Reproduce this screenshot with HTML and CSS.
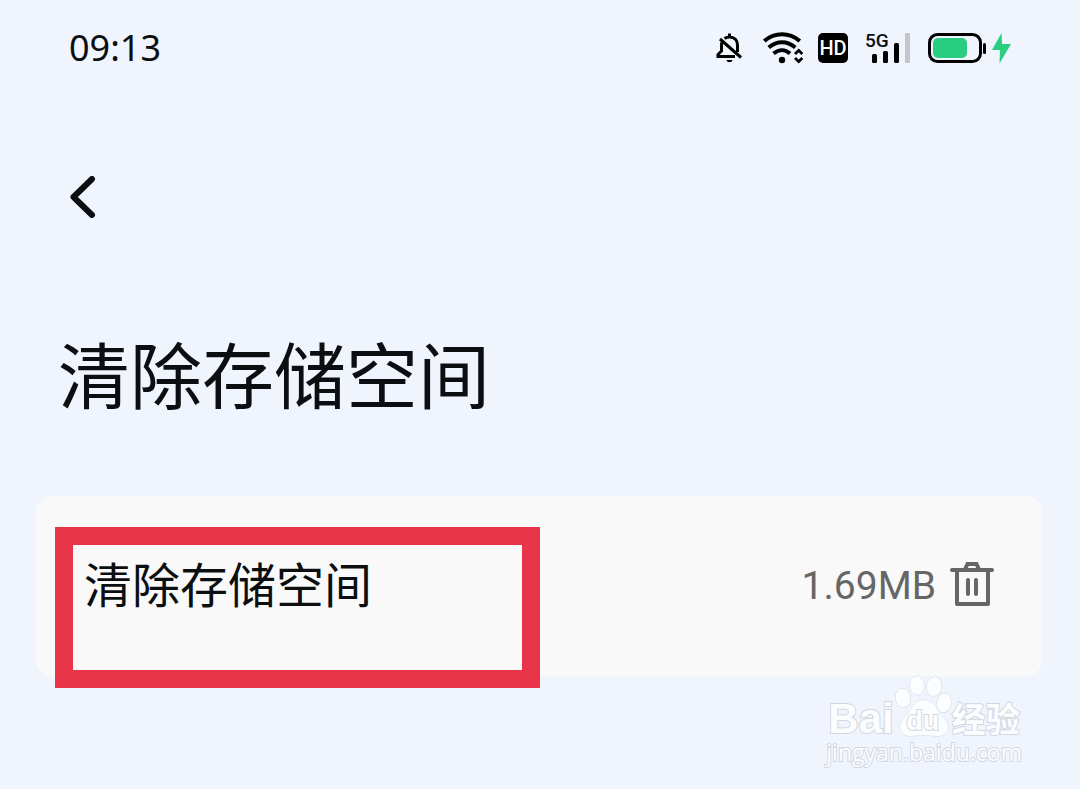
FILE: index.html
```html
<!DOCTYPE html>
<html lang="zh-CN">
<head>
    <meta charset="UTF-8">
    <meta name="viewport" content="width=device-width, initial-scale=1.0">
    <title>清除存储空间</title>
    <link rel="stylesheet" href="styles.css">
</head>
<body>
    <header class="status-bar">
        <time class="clock">09:13</time>
        <div class="status-icons">
            <!-- muted bell -->
            <svg class="bell" width="28" height="32" viewBox="0 0 28 32" fill="none" stroke="#000" stroke-width="3">
                <path d="M9.500 6.500C11 5.500 12.500 5 14.500 5c5 0 8 3.400 8 8v7"/>
                <path d="M7 10.500C6.500 11.500 6.500 12 6.500 13v6L3 22.500V24.500H20"/>
                <path d="M5 7l21 18.500M14.500 1.500V5"/>
                <path d="M11.500 28h6c-.5 3-5.500 3-6 0z" fill="#000" stroke="none"/>
            </svg>
            <!-- wifi -->
            <svg class="wifi" width="40" height="32" viewBox="0 0 40 32" fill="none" stroke="#000" stroke-width="4">
                <path d="M1.200 9C12 0 26 0 36.800 9"/>
                <path d="M5.700 15.500C14 8.500 24 8.500 32.300 15.500"/>
                <path d="M10.600 21.500C16 17 22 17 27 21.500"/>
                <circle cx="19" cy="28" r="3.200" fill="#000" stroke="none"/>
                <path d="M32 22l3.700-3.500 3.700 3.500M32 26l3.700 3.500 3.700-3.500" stroke-width="2.800"/>
            </svg>
            <span class="hd">HD</span>
            <!-- signal -->
            <div class="signal">
                <span class="network">5G</span>
                <svg width="44" height="32" viewBox="0 0 44 32">
                    <rect x="6" y="22" width="5" height="9" rx="1.500"/>
                    <rect x="17" y="19" width="5" height="12" rx="1.500"/>
                    <rect x="28" y="11" width="5" height="20" rx="1.500"/>
                    <rect x="39" y="1" width="5" height="30" rx="1" fill="#c5c6cb"/>
                </svg>
            </div>
            <!-- battery -->
            <svg class="battery" width="84" height="32" viewBox="0 0 84 32">
                <rect x="1.500" y="2.500" width="51" height="27" rx="8" fill="none" stroke="#000" stroke-width="3"/>
                <rect x="5" y="6" width="34" height="20" rx="5" fill="#2ace80"/>
                <rect x="55" y="11" width="3" height="11" rx="1.500"/>
                <path d="M73.500 1L64 18h8l-.5 13.500L83 12h-9z" fill="#2ace80"/>
            </svg>
        </div>
    </header>

    <nav class="nav">
        <button class="back" type="button" aria-label="返回">
            <svg width="26" height="42" viewBox="0 0 26 42" fill="none" stroke="#0c0f11" stroke-width="6" stroke-linecap="round" stroke-linejoin="round">
                <path d="M22 3L3.500 21 22 39"/>
            </svg>
        </button>
    </nav>

    <main>
        <h1>清除存储空间</h1>

        <section class="card">
            <span class="label">清除存储空间</span>
            <span class="size">1.69MB</span>
            <button class="trash" type="button" aria-label="清除">
                <svg width="44" height="46" viewBox="0 0 44 46" fill="none" stroke="#666" stroke-width="4">
                    <path d="M2 8h40" stroke-linecap="round"/>
                    <path d="M15 7.500L17.500 2h9L29 7.500"/>
                    <path d="M7 8v34h31V8" stroke-linejoin="round"/>
                    <path d="M18 18v14M26 18v14" stroke-linecap="round"/>
                </svg>
            </button>
            <div class="highlight"></div>
        </section>
    </main>

    <!-- site mark in the corner -->
    <div class="watermark">
        <div class="mark-row">
            <span class="mark-latin">Bai</span>
            <div class="paw">
                <svg width="58" height="64" viewBox="0 0 58 64">
                    <ellipse cx="9" cy="23" rx="7.500" ry="9.500" transform="rotate(-8 9 23)"/>
                    <ellipse cx="23" cy="10.500" rx="7" ry="9.500"/>
                    <ellipse cx="40" cy="11.500" rx="7.500" ry="9.500" transform="rotate(10 40 11.500)"/>
                    <ellipse cx="50" cy="28" rx="7" ry="9.500" transform="rotate(8 50 28)"/>
                    <path d="M30 25c8 0 11 6 15 12 5 6 9 10 9 15 0 6-5 9-11 9-5 0-8-1-13-1s-8 1-13 1c-6 0-11-3-11-9 0-5 4-9 9-15 4-6 7-12 15-12z"/>
                </svg>
                <span class="mark-du">du</span>
            </div>
            <span class="mark-cjk">经验</span>
        </div>
        <div class="mark-url">jingyan.baidu.com</div>
    </div>
</body>
</html>
```
FILE: styles.css
```css
* {
    box-sizing: border-box;
}

body {
    position: relative;
    margin: 0;
    min-height: 100vh;
    background-color: #f0f5fd;
    color: #0c0f11;
    font-family: "Noto Sans", "Noto Sans CJK SC", sans-serif;
}

button {
    display: flex;
    padding: 0;
    border: 0;
    background: none;
    cursor: pointer;
}

.status-bar {
    display: flex;
    align-items: center;
    justify-content: space-between;
    height: 96px;
    padding: 0 68px 0 69px;
}

.clock {
    font-size: 36px;
    line-height: 48px;
}

.status-icons {
    display: flex;
    align-items: center;
}

.wifi {
    margin-left: 20px;
}

.hd {
    width: 30px;
    margin: 0 18px 0 15px;
    border-radius: 5px;
    background-color: #000;
    color: #fff;
    font-family: Roboto, sans-serif;
    font-size: 20px;
    font-weight: 500;
    line-height: 30px;
    text-align: center;
}

.signal {
    position: relative;
    display: flex;
}

.network {
    position: absolute;
    top: -1px;
    left: -1px;
    font-family: Roboto, sans-serif;
    font-size: 19px;
    font-weight: 500;
    line-height: 20px;
}

.battery {
    margin-left: 18px;
}

.nav {
    padding: 80px 70px 0;
}

h1 {
    margin: 0;
    padding: 102px 58px 0;
    font-family: "Noto Sans CJK SC", sans-serif;
    font-size: 72px;
    font-weight: 400;
    line-height: 104px;
}

.card {
    position: relative;
    display: flex;
    align-items: flex-start;
    min-height: 180px;
    margin: 72px 38px 0 36px;
    padding: 50px 48px;
    border-radius: 16px;
    background-color: #f9f9f9;
}

.label {
    flex: 1;
    font-family: "Noto Sans CJK SC", sans-serif;
    font-size: 48px;
    line-height: 72px;
}

.size {
    margin-right: 14px;
    color: #666;
    font-family: Roboto, sans-serif;
    font-size: 39px;
    line-height: 80px;
}

.trash {
    margin-top: 16px;
}

/* frame laid over the row */
.highlight {
    position: absolute;
    top: 31px;
    left: 19px;
    width: 485px;
    height: 161px;
    border: 18px solid #e93549;
}

.watermark {
    position: absolute;
    right: 58px;
    bottom: 24px;
    color: #fcfdff;
    white-space: nowrap;
    fill: #fcfdff;
    stroke: #d3d7df;
    paint-order: stroke;
    -webkit-text-stroke: 2px #d3d7df;
}

.mark-row {
    display: flex;
    align-items: flex-end;
}

.mark-latin {
    padding-left: 2px;
    font-family: "Liberation Sans", sans-serif;
    font-size: 42px;
    font-weight: 700;
    line-height: 40px;
}

.paw {
    position: relative;
    display: flex;
}

.mark-du {
    position: absolute;
    right: 0;
    bottom: 4px;
    left: 0;
    font-family: "Liberation Sans", sans-serif;
    font-size: 27px;
    font-weight: 700;
    line-height: 28px;
    text-align: center;
}

.mark-cjk {
    font-family: "Noto Sans CJK SC", sans-serif;
    font-size: 34px;
    font-weight: 700;
    line-height: 42px;
}

.mark-url {
    font-family: "Open Sans", sans-serif;
    font-size: 23px;
    line-height: 26px;
}
```
